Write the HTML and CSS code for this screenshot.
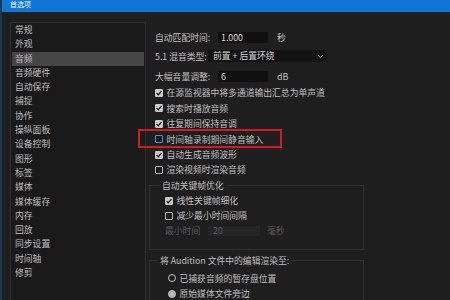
FILE: index.html
```html
<!DOCTYPE html>
<html lang="zh-CN">
<head>
<meta charset="utf-8">
<title>首选项</title>
<link rel="stylesheet" href="styles.css">
</head>
<body>
<div class="window">
  <div class="titlebar">首选项</div>
  <div class="main">
    <ul class="nav">
      <li>常规</li>
      <li>外观</li>
      <li class="sel">音频</li>
      <li>音频硬件</li>
      <li>自动保存</li>
      <li>捕捉</li>
      <li>协作</li>
      <li>操纵面板</li>
      <li>设备控制</li>
      <li>图形</li>
      <li>标签</li>
      <li>媒体</li>
      <li>媒体缓存</li>
      <li>内存</li>
      <li>回放</li>
      <li>同步设置</li>
      <li>时间轴</li>
      <li>修剪</li>
    </ul>
    <div class="pane">
      <div class="row r1"><span class="lbl">自动匹配时间:</span><span class="field">1.000</span><span class="unit">秒</span></div>
      <div class="row r2"><span class="lbl lbl-short">5.1 混音类型:</span><span class="select">前置 + 后置环绕<svg class="chev" width="7" height="5" viewBox="0 0 7 5"><path d="M1 1.2 L3.5 3.6 L6 1.2" fill="none" stroke="#a8a8a8" stroke-width="1"/></svg></span></div>
      <div class="row r3"><span class="lbl">大幅音量调整:</span><span class="field">6</span><span class="unit">dB</span></div>
      <div class="checks">
        <div class="check on"><span class="box"><svg width="8" height="8" viewBox="0 0 8 8"><path d="M1.6 4.1 L3.3 5.8 L6.5 2.1" fill="none" stroke="#1f1f1f" stroke-width="1.3"/></svg></span>在源监视器中将多通道输出汇总为单声道</div>
        <div class="check on"><span class="box"><svg width="8" height="8" viewBox="0 0 8 8"><path d="M1.6 4.1 L3.3 5.8 L6.5 2.1" fill="none" stroke="#1f1f1f" stroke-width="1.3"/></svg></span>搜索时播放音频</div>
        <div class="check on"><span class="box"><svg width="8" height="8" viewBox="0 0 8 8"><path d="M1.6 4.1 L3.3 5.8 L6.5 2.1" fill="none" stroke="#1f1f1f" stroke-width="1.3"/></svg></span>往复期间保持音调</div>
        <div class="check focus marked"><span class="box"></span>时间轴录制期间静音输入</div>
        <div class="check on"><span class="box"><svg width="8" height="8" viewBox="0 0 8 8"><path d="M1.6 4.1 L3.3 5.8 L6.5 2.1" fill="none" stroke="#1f1f1f" stroke-width="1.3"/></svg></span>自动生成音频波形</div>
        <div class="check"><span class="box"></span>渲染视频时渲染音频</div>
      </div>
      <fieldset class="group g1">
        <legend>自动关键帧优化</legend>
        <div class="check on"><span class="box"><svg width="8" height="8" viewBox="0 0 8 8"><path d="M1.6 4.1 L3.3 5.8 L6.5 2.1" fill="none" stroke="#1f1f1f" stroke-width="1.3"/></svg></span>线性关键帧细化</div>
        <div class="check"><span class="box"></span>减少最小时间间隔</div>
        <div class="row disabled"><span class="lbl lbl-min">最小时间</span><span class="field field-dis">20</span><span class="unit unit-dis">毫秒</span></div>
      </fieldset>
      <fieldset class="group g2">
        <legend>将 Audition 文件中的编辑渲染至:</legend>
        <div class="radio"><span class="dot"></span>已捕获音频的暂存盘位置</div>
        <div class="radio on"><span class="dot"></span>原始媒体文件旁边</div>
      </fieldset>
    </div>
  </div>
</div>
</body>
</html>
```

FILE: styles.css
```css
html, body {
  margin: 0;
  padding: 0;
  background: #1f1f1f;
}
body {
  width: 450px;
  height: 300px;
  overflow: hidden;
  font-family: "Noto Sans CJK SC", "Noto Sans", sans-serif;
  font-size: 8.8px;
  color: #bfbfbf;
}
.window {
  height: 300px;
  overflow: hidden;
  border-left: 2px solid #173754;
  box-sizing: border-box;
}
.titlebar {
  height: 12px;
  background: #1077d4;
  color: #f2f2f2;
  font-size: 7px;
  line-height: 9px;
  padding-left: 8px;
}
.main {
  display: flex;
  gap: 3px;
  padding: 10px 0 0 8px;
}
.nav {
  list-style: none;
  margin: 0;
  padding: 0 1px;
  width: 136px;
  height: 290px;
  box-sizing: border-box;
  border: 1px solid #303030;
  background: #1a1a1a;
  flex: none;
}
.nav li {
  height: 14.3px;
  line-height: 14.3px;
  padding-left: 3px;
  white-space: nowrap;
}
.nav li.sel {
  background: #464646;
}
.pane {
  display: flex;
  flex-direction: column;
  padding-top: 9px;
  width: 215px;
  flex: none;
}
.row {
  display: flex;
  align-items: center;
  height: 12px;
  padding-left: 6px;
  white-space: nowrap;
}
.r2 { margin-top: 7px; }
.r3 { margin-top: 8px; }
.lbl {
  width: 63px;
  flex: none;
}
.lbl-short { width: 53px; }
.field {
  width: 50px;
  height: 11px;
  line-height: 11px;
  background: #111111;
  color: #d2d2d2;
  padding-left: 3px;
  box-sizing: border-box;
  flex: none;
}
.unit {
  margin-left: 9px;
}
.select {
  width: 119px;
  height: 12px;
  line-height: 12px;
  background: #131313;
  color: #cfcfcf;
  padding-left: 5px;
  box-sizing: border-box;
  display: flex;
  align-items: center;
  justify-content: space-between;
  padding-right: 3px;
  flex: none;
}
.chev { display: block; }
.checks {
  margin-top: 3.3px;
  padding-left: 6px;
}
.check {
  height: 15.4px;
  display: flex;
  align-items: center;
  gap: 3.5px;
  white-space: nowrap;
}
.box {
  width: 8px;
  height: 8px;
  box-sizing: border-box;
  border: 1px solid #b4b4b4;
  border-radius: 1px;
  flex: none;
  display: flex;
  align-items: center;
  justify-content: center;
}
.check.on .box {
  background: #c9c9c9;
  border-color: #c9c9c9;
}
.box svg { display: block; flex: none; }
.check.focus .box {
  border-color: #4a8fdb;
  background: #1a1a1a;
}
.check.marked {
  position: relative;
}
.check.marked::after {
  content: "";
  position: absolute;
  left: -17px;
  top: -2.5px;
  width: 144px;
  height: 19px;
  box-sizing: border-box;
  border: 2px solid #d11b27;
}
.group {
  margin: 0;
  border: 1px solid #303030;
  min-width: 0;
  width: 215px;
  box-sizing: border-box;
}
.group legend {
  line-height: 10px;
  padding: 0 2px;
  white-space: nowrap;
}
.g1 {
  margin-top: 3.3px;
  padding: 2.5px 0 10.5px 15px;
}
.g1 legend { margin-left: -5px; }
.g1 .check { height: 15px; }
.disabled {
  height: 15px;
  padding-left: 0;
  color: #5a5a5a;
}
.lbl-min { width: 43px; }
.field-dis {
  width: 52px;
  height: 10px;
  line-height: 10px;
  background: #262626;
  color: #5e5e5e;
  padding-left: 5px;
}
.unit-dis { margin-left: 7px; }
.g2 {
  margin-top: 6px;
  padding: 4.5px 0 4px 18px;
}
.g2 legend { margin-left: -10px; }
.radio {
  height: 15.5px;
  display: flex;
  align-items: center;
  gap: 3.5px;
  white-space: nowrap;
}
.dot {
  width: 8px;
  height: 8px;
  box-sizing: border-box;
  border: 1.3px solid #c4c4c4;
  border-radius: 50%;
  flex: none;
}
.radio.on .dot {
  background: #c4c4c4;
  box-shadow: inset 0 0 0 1px #9a9a9a;
}
```
